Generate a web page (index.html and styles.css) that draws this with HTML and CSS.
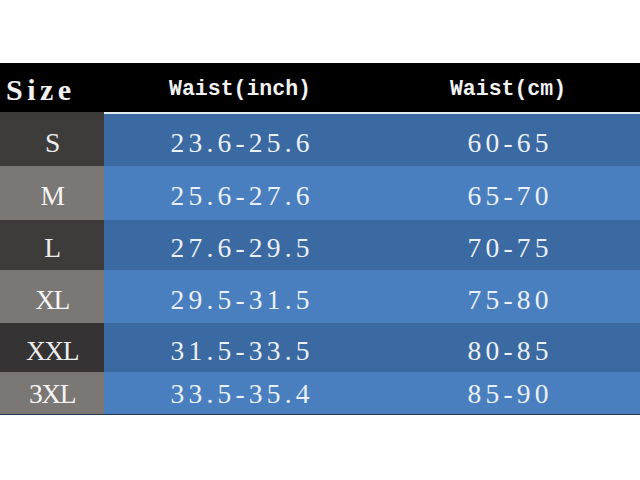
FILE: index.html
```html
<!DOCTYPE html>
<html>
<head>
<meta charset="utf-8">
<link rel="stylesheet" href="styles.css">
</head>
<body>
<div class="chart">
  <div class="head">
    <div class="h size-h">Size</div>
    <div class="h">Waist(inch)</div>
    <div class="h">Waist(cm)</div>
  </div>
  <div class="rule"></div>
  <div class="row dark r1"><div class="sz">S</div><div class="v">23.6-25.6</div><div class="v">60-65</div></div>
  <div class="row light r2"><div class="sz">M</div><div class="v">25.6-27.6</div><div class="v">65-70</div></div>
  <div class="row dark r3"><div class="sz">L</div><div class="v">27.6-29.5</div><div class="v">70-75</div></div>
  <div class="row light r4"><div class="sz">XL</div><div class="v">29.5-31.5</div><div class="v">75-80</div></div>
  <div class="row dark r5"><div class="sz">XXL</div><div class="v">31.5-33.5</div><div class="v">80-85</div></div>
  <div class="row light r6"><div class="sz">3XL</div><div class="v">33.5-35.4</div><div class="v">85-90</div></div>
  <div class="bottom"></div>
</div>
</body>
</html>
```
FILE: styles.css
```css
html, body {
  margin: 0;
  padding: 0;
  background: #ffffff;
}
body {
  padding-top: 63px;
  font-family: "Liberation Serif", "DejaVu Serif", serif;
}
.chart {
  width: 640px;
}
.head {
  display: grid;
  grid-template-columns: 104px 272px 1fr;
  height: 49px;
  background: #000000;
  color: #f2f2f2;
  align-items: center;
}
.h {
  text-align: center;
  font-family: "Liberation Mono", "DejaVu Sans Mono", monospace;
  font-weight: bold;
  font-size: 21.5px;
  padding-top: 2px;
}
.h.size-h {
  text-align: left;
  padding-left: 6px;
  font-family: "Liberation Serif", "DejaVu Serif", serif;
  font-size: 30px;
  letter-spacing: 4.5px;
  padding-top: 4px;
}
.rule {
  height: 2px;
  background: linear-gradient(to right, #3d3b3a 0 104px, #e4ebf0 104px);
}
.row {
  display: grid;
  grid-template-columns: 104px 272px 1fr;
  align-items: center;
  font-size: 27.5px;
  color: #eaf0f7;
}
.row > div {
  height: 100%;
  display: flex;
  align-items: center;
  justify-content: center;
  padding-top: 6px;
  box-sizing: border-box;
}
.v {
  letter-spacing: 4.2px;
  text-indent: 4.2px;
}
.sz {
  letter-spacing: -1.5px;
}
.r1 { height: 52px; }
.r2 { height: 54px; }
.r3 { height: 50px; }
.r4 { height: 53px; }
.r5 { height: 49px; }
.r6 { height: 42px; }
.r6 > div { padding-top: 2px; }
.dark .sz { background: #3e3c3b; color: #ececec; }
.light .sz { background: #7a7775; color: #f4f4f4; }
.r5 .sz { background: #353333; }
.dark .v { background: #3b69a2; }
.light .v { background: #4a7fbf; }
.bottom {
  height: 1px;
  background: #22364e;
}
```
